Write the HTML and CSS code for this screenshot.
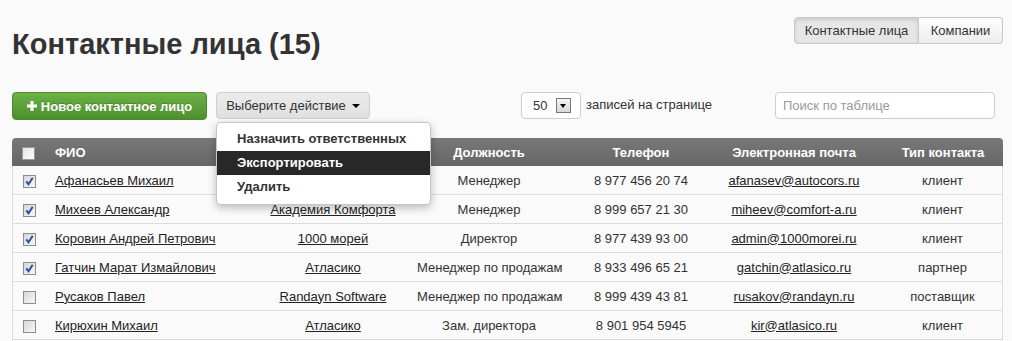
FILE: index.html
```html
<!DOCTYPE html>
<html lang="ru">
<head>
<meta charset="utf-8">
<title>Контактные лица</title>
<link rel="stylesheet" href="styles.css">
</head>
<body>
<div class="page">
  <header class="topbar">
    <h1 class="title">Контактные лица (15)</h1>
    <div class="tabs">
      <button class="tab tab-contacts active">Контактные лица</button><button class="tab tab-companies">Компании</button>
    </div>
  </header>

  <div class="toolbar">
    <button class="btn btn-green">
      <svg class="plus" width="10" height="10" viewBox="0 0 10 10"><path d="M3.5 0h3v3.5h3.5v3h-3.5v3.5h-3v-3.5h-3.5v-3h3.5z" fill="#fff"/></svg>
      <span>Новое контактное лицо</span>
    </button>
    <div class="action">
      <button class="btn btn-grey"><span>Выберите действие</span><span class="caret"></span></button>
      <ul class="menu">
        <li class="menu-item">Назначить ответственных</li>
        <li class="menu-item active">Экспортировать</li>
        <li class="menu-item">Удалить</li>
      </ul>
    </div>
    <div class="perpage">
      <div class="select"><span class="select-val">50</span><span class="select-arrow"></span></div>
      <span class="perpage-label">записей на странице</span>
    </div>
    <input class="search" type="text" placeholder="Поиск по таблице">
  </div>

  <table class="grid">
    <colgroup>
      <col class="c-cb"><col class="c-fio"><col class="c-comp"><col class="c-pos"><col class="c-phone"><col class="c-mail"><col class="c-type">
    </colgroup>
    <thead>
      <tr>
        <th class="cell-cb"><span class="cb cb-head"></span></th>
        <th class="cell-fio">ФИО</th>
        <th></th>
        <th>Должность</th>
        <th>Телефон</th>
        <th>Электронная почта</th>
        <th class="cell-type">Тип контакта</th>
      </tr>
    </thead>
    <tbody>
      <tr>
        <td class="cell-cb"><span class="cb checked"><svg viewBox="0 0 11 11" width="11" height="11"><path d="M2.3 5.3l2.2 2.9 4.2-6.4" fill="none" stroke="#2d4f9e" stroke-width="2"/></svg></span></td>
        <td class="cell-fio"><a href="#">Афанасьев Михаил</a></td>
        <td></td>
        <td>Менеджер</td>
        <td>8 977 456 20 74</td>
        <td><a href="#">afanasev@autocors.ru</a></td>
        <td class="cell-type">клиент</td>
      </tr>
      <tr>
        <td class="cell-cb"><span class="cb checked"><svg viewBox="0 0 11 11" width="11" height="11"><path d="M2.3 5.3l2.2 2.9 4.2-6.4" fill="none" stroke="#2d4f9e" stroke-width="2"/></svg></span></td>
        <td class="cell-fio"><a href="#">Михеев Александр</a></td>
        <td><a href="#">Академия Комфорта</a></td>
        <td>Менеджер</td>
        <td>8 999 657 21 30</td>
        <td><a href="#">miheev@comfort-a.ru</a></td>
        <td class="cell-type">клиент</td>
      </tr>
      <tr>
        <td class="cell-cb"><span class="cb checked"><svg viewBox="0 0 11 11" width="11" height="11"><path d="M2.3 5.3l2.2 2.9 4.2-6.4" fill="none" stroke="#2d4f9e" stroke-width="2"/></svg></span></td>
        <td class="cell-fio"><a href="#">Коровин Андрей Петрович</a></td>
        <td><a href="#">1000 морей</a></td>
        <td>Директор</td>
        <td>8 977 439 93 00</td>
        <td><a href="#">admin@1000morei.ru</a></td>
        <td class="cell-type">клиент</td>
      </tr>
      <tr>
        <td class="cell-cb"><span class="cb checked"><svg viewBox="0 0 11 11" width="11" height="11"><path d="M2.3 5.3l2.2 2.9 4.2-6.4" fill="none" stroke="#2d4f9e" stroke-width="2"/></svg></span></td>
        <td class="cell-fio"><a href="#">Гатчин Марат Измайлович</a></td>
        <td><a href="#">Атласико</a></td>
        <td>Менеджер по продажам</td>
        <td>8 933 496 65 21</td>
        <td><a href="#">gatchin@atlasico.ru</a></td>
        <td class="cell-type">партнер</td>
      </tr>
      <tr>
        <td class="cell-cb"><span class="cb"></span></td>
        <td class="cell-fio"><a href="#">Русаков Павел</a></td>
        <td><a href="#">Randayn Software</a></td>
        <td>Менеджер по продажам</td>
        <td>8 999 439 43 81</td>
        <td><a href="#">rusakov@randayn.ru</a></td>
        <td class="cell-type">поставщик</td>
      </tr>
      <tr>
        <td class="cell-cb"><span class="cb"></span></td>
        <td class="cell-fio"><a href="#">Кирюхин Михаил</a></td>
        <td><a href="#">Атласико</a></td>
        <td>Зам. директора</td>
        <td>8 901 954 5945</td>
        <td><a href="#">kir@atlasico.ru</a></td>
        <td class="cell-type">клиент</td>
      </tr>
    </tbody>
  </table>
</div>
</body>
</html>
```

FILE: styles.css
```css
* { box-sizing: border-box; }

html, body {
  margin: 0;
  padding: 0;
  background: #fafafa;
}

body {
  font-family: "Liberation Sans", Arial, sans-serif;
  font-size: 13px;
  color: #333;
}

.page {
  padding: 17px 9px 0 12px;
  width: 1012px;
}

/* top bar */
.topbar {
  display: flex;
  justify-content: space-between;
  align-items: flex-start;
}

.title {
  margin: 10px 0 0 0;
  font-size: 29px;
  line-height: 34px;
  font-weight: bold;
  color: #333;
}

.tabs {
  display: flex;
}

.tab {
  height: 27px;
  padding: 0;
  border: 1px solid #c8c8c8;
  background: linear-gradient(#ffffff, #ececec);
  font-family: inherit;
  font-size: 13px;
  color: #333;
  margin: 0;
  text-align: center;
}

.tab-contacts {
  width: 125px;
  border-radius: 4px 0 0 4px;
}

.tab-companies {
  width: 84px;
  border-left: none;
  border-radius: 0 4px 4px 0;
}

.tab.active {
  background: #e6e6e6;
  box-shadow: inset 0 2px 4px rgba(0, 0, 0, 0.12);
}

/* toolbar */
.toolbar {
  display: flex;
  align-items: flex-start;
  margin-top: 31px;
  padding-right: 8px;
  height: 28px;
}

.btn {
  height: 28px;
  display: inline-flex;
  align-items: center;
  justify-content: center;
  font-family: inherit;
  font-size: 13px;
  border-radius: 4px;
  margin: 0;
  padding: 0;
}

.btn-green {
  width: 195px;
  gap: 4px;
  background: linear-gradient(#6cb247, #4d8e2d);
  border: 1px solid #4a8a2b;
  color: #fff;
  font-weight: bold;
  text-shadow: 0 -1px 0 rgba(0, 0, 0, 0.2);
}

.plus {
  display: block;
}

.action {
  position: relative;
  margin-left: 9px;
}

.btn-grey {
  width: 154px;
  gap: 6px;
  background: linear-gradient(#ebebeb, #e0e0e0);
  border: 1px solid #cfcfcf;
  color: #333;
  height: 27px;
}

.caret {
  width: 0;
  height: 0;
  border-left: 4px solid transparent;
  border-right: 4px solid transparent;
  border-top: 4px solid #000;
  margin-top: 1px;
}

.menu {
  position: absolute;
  top: 30px;
  left: 0;
  width: 215px;
  margin: 0;
  padding: 4px 0 5px;
  list-style: none;
  background: #fff;
  border: 1px solid rgba(0, 0, 0, 0.22);
  border-radius: 5px;
  box-shadow: 0 3px 8px rgba(0, 0, 0, 0.25);
  z-index: 10;
}

.menu-item {
  height: 24px;
  line-height: 24px;
  padding: 0 20px;
  font-weight: bold;
  color: #333;
  white-space: nowrap;
}

.menu-item.active {
  background: #282828;
  color: #fff;
}

.perpage {
  display: flex;
  align-items: center;
  margin-left: 151px;
  height: 27px;
}

.select {
  width: 60px;
  height: 27px;
  border: 1px solid #cdcdcd;
  border-radius: 4px;
  background: #fff;
  display: flex;
  align-items: center;
  padding-left: 11px;
  gap: 9px;
}

.select-val {
  color: #333;
}

.select-arrow {
  position: relative;
  width: 15px;
  height: 15px;
  border: 1px solid #777;
  background: linear-gradient(#f6f6f6, #d8d8d8);
}

.select-arrow::after {
  content: "";
  position: absolute;
  left: 3px;
  top: 5px;
  border-left: 3.5px solid transparent;
  border-right: 3.5px solid transparent;
  border-top: 4px solid #000;
}

.perpage-label {
  margin-left: 5px;
  margin-top: -2px;
}

.search {
  margin-left: auto;
  width: 220px;
  height: 27px;
  border: 1px solid #cdcdcd;
  border-radius: 4px;
  background: #fff;
  padding: 0 7px;
  font-family: inherit;
  font-size: 13px;
  color: #333;
  outline: none;
}

.search::placeholder {
  color: #999;
}

/* table */
.grid {
  margin-top: 18px;
  width: 991px;
  table-layout: fixed;
  border-collapse: separate;
  border-spacing: 0;
}

.c-cb { width: 33px; }
.c-fio { width: 210px; }
.c-comp { width: 156px; }
.c-pos { width: 156px; }
.c-phone { width: 148px; }
.c-mail { width: 158px; }
.c-type { width: 130px; }

.grid th {
  height: 28px;
  padding: 0 6px;
  background: linear-gradient(#787878, #666666);
  color: #fff;
  font-weight: bold;
  font-size: 13px;
  text-align: center;
  white-space: nowrap;
}

.grid th:first-child {
  border-top-left-radius: 4px;
}

.grid th:last-child {
  border-top-right-radius: 4px;
}

.grid td {
  height: 29px;
  padding: 0 6px;
  border-bottom: 1px solid #dcdcdc;
  text-align: center;
  white-space: nowrap;
  color: #333;
}

.grid td:first-child {
  border-left: 1px solid #dcdcdc;
}

.grid td:last-child {
  border-right: 1px solid #dcdcdc;
}

.grid .cell-cb {
  padding: 0 0 0 10px;
  text-align: left;
}

.grid .cell-fio {
  text-align: left;
  padding-left: 10px;
}

.grid .cell-type {
  padding-left: 16px;
  padding-right: 6px;
}

.grid a {
  color: #222;
  text-decoration: underline;
}

.cb {
  display: inline-flex;
  align-items: center;
  justify-content: center;
  width: 13px;
  height: 13px;
  border: 1px solid #8c8c8c;
  background: linear-gradient(135deg, #d6d6d6, #f8f8f8);
  vertical-align: middle;
  margin-top: 2px;
}

.cb-head {
  background: linear-gradient(135deg, #e2e2e2, #ffffff);
  border-color: #999;
  margin-top: 0;
}

.cb svg {
  display: block;
}
```
